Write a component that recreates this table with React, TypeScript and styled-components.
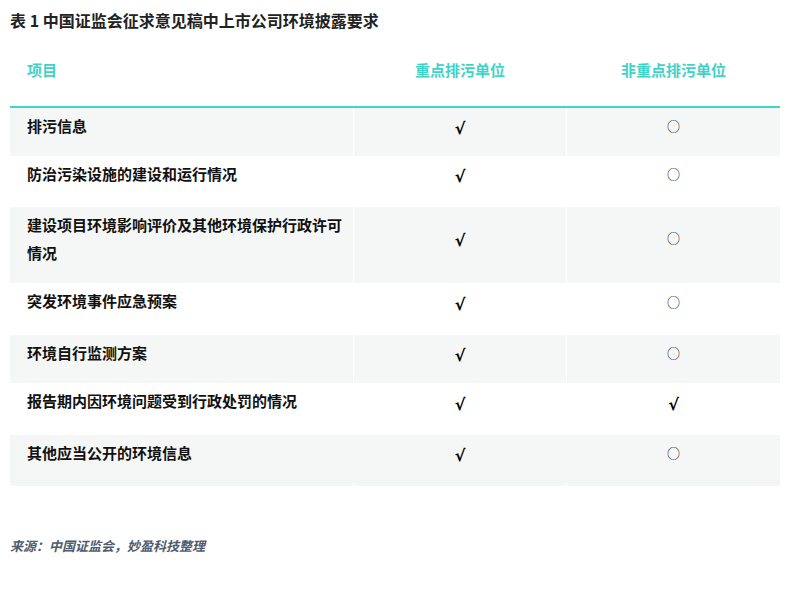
import React from "react";
import styled, { createGlobalStyle } from "styled-components";

const Global = createGlobalStyle`
  html, body { margin: 0; padding: 0; background: #ffffff; }
  body { font-family: "Noto Sans CJK SC", "Noto Sans", sans-serif; }
`;

const Page = styled.div`
  width: 795px;
  padding: 10px 15px 0 10px;
  box-sizing: border-box;
`;

const Title = styled.h1`
  margin: 0 0 10px 0;
  font-size: 16px;
  line-height: 20px;
  font-weight: 700;
  color: #222222;
`;

const Table = styled.div`
  width: 770px;
  display: flex;
  flex-direction: column;
  background: #ffffff;
`;

const COLS = "343px 212px 213px";

const HeadRow = styled.div`
  display: grid;
  grid-template-columns: ${COLS};
  column-gap: 1px;
  height: 66px;
  border-bottom: 2px solid #3dd6c9;
  box-sizing: content-box;
`;

const HeadCell = styled.div<{ $center?: boolean }>`
  padding: 16px 0 0 ${(p) => (p.$center ? "0" : "17px")};
  text-align: ${(p) => (p.$center ? "center" : "left")};
  font-size: 15px;
  line-height: 28px;
  font-weight: 700;
  color: #3fd3c7;
`;

const Row = styled.div<{ $striped: boolean; $h: number; $divider: boolean }>`
  display: grid;
  grid-template-columns: ${COLS};
  column-gap: 1px;
  height: ${(p) => p.$h}px;
  background: ${(p) => (p.$striped ? (p.$divider ? "#ffffff" : "#f5f7f6") : "#ffffff")};
`;

const Cell = styled.div<{ $striped: boolean; $center?: boolean }>`
  background: ${(p) => (p.$striped ? "#f5f7f6" : "#ffffff")};
  display: flex;
  align-items: center;
  justify-content: ${(p) => (p.$center ? "center" : "flex-start")};
  padding: 4px ${(p) => (p.$center ? "0" : "10px")} 16px ${(p) => (p.$center ? "0" : "17px")};
  box-sizing: border-box;
  font-size: 15px;
  line-height: 28px;
  font-weight: 700;
  color: #111111;
`;

const LabelText = styled.span`
  align-self: flex-start;
`;

const Check = styled.span`
  font-family: "DejaVu Sans", sans-serif;
  font-weight: 700;
  font-size: 16px;
  color: #000000;
  margin-top: 3px;
`;

const Circle = styled.span`
  font-family: "Noto Sans CJK SC", sans-serif;
  font-weight: 400;
  font-size: 13px;
  color: #111111;
  margin-top: -3px;
`;

const Stripe = styled.div`
  height: 3px;
  margin-top: 1px;
  background: #f3f5f4;
`;

const Source = styled.p`
  margin: 53px 0 0 0;
  font-size: 13px;
  line-height: 20px;
  font-style: italic;
  font-weight: 700;
  color: #4f5b6d;
`;

type Mark = "check" | "circle";

const rows: { label: string; a: Mark; b: Mark; h: number }[] = [
  { label: "排污信息", a: "check", b: "circle", h: 48 },
  { label: "防治污染设施的建设和运行情况", a: "check", b: "circle", h: 51 },
  { label: "建设项目环境影响评价及其他环境保护行政许可情况", a: "check", b: "circle", h: 76 },
  { label: "突发环境事件应急预案", a: "check", b: "circle", h: 52 },
  { label: "环境自行监测方案", a: "check", b: "circle", h: 48 },
  { label: "报告期内因环境问题受到行政处罚的情况", a: "check", b: "check", h: 52 },
  { label: "其他应当公开的环境信息", a: "check", b: "circle", h: 44 },
];

const MarkView = ({ m }: { m: Mark }) =>
  m === "check" ? <Check>√</Check> : <Circle>○</Circle>;

export default function App() {
  return (
    <Page>
      <Global />
      <Title>表 1 中国证监会征求意见稿中上市公司环境披露要求</Title>
      <Table>
        <HeadRow>
          <HeadCell>项目</HeadCell>
          <HeadCell $center>重点排污单位</HeadCell>
          <HeadCell $center>非重点排污单位</HeadCell>
        </HeadRow>
        {rows.map((r, i) => {
          const striped = i % 2 === 0;
          const divider = i !== rows.length - 1;
          return (
            <Row key={r.label} $striped={striped} $h={r.h} $divider={divider}>
              <Cell $striped={striped}>
                <LabelText>{r.label}</LabelText>
              </Cell>
              <Cell $striped={striped} $center>
                <MarkView m={r.a} />
              </Cell>
              <Cell $striped={striped} $center>
                <MarkView m={r.b} />
              </Cell>
            </Row>
          );
        })}
        <Stripe />
      </Table>
      <Source>来源：中国证监会，妙盈科技整理</Source>
    </Page>
  );
}
